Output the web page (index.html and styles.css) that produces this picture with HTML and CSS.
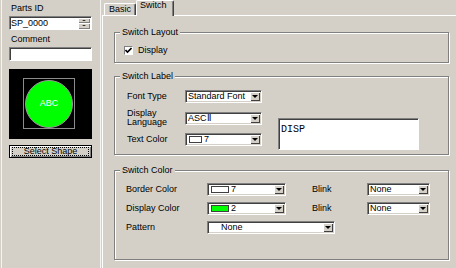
FILE: index.html
```html
<!DOCTYPE html>
<html>

<head>
    <title>Parts Settings - Switch</title>
    <link rel="stylesheet" href="styles.css">
</head>

<body>
    <div class="window">
        <div class="side">
            <div class="field-label">Parts ID</div>
            <div class="textbox spin-box">
                <span class="textbox-value">SP_0000</span>
                <span class="spinner">
                    <span class="spin-btn"><span class="arrow-up"></span></span>
                    <span class="spin-btn"><span class="arrow-down"></span></span>
                </span>
            </div>
            <div class="field-label">Comment</div>
            <div class="textbox"></div>
            <div class="preview">
                <div class="shape-frame">
                    <div class="shape">ABC</div>
                </div>
            </div>
            <div class="button"><span class="focus">Select Shape</span></div>
        </div>

        <div class="main">
            <div class="tabs">
                <div class="tab">Basic</div>
                <div class="tab active">Switch</div>
            </div>
            <div class="tab-panel">
                <fieldset class="group layout-group">
                    <legend>Switch Layout</legend>
                    <div class="check">
                        <span class="check-box">
                            <svg width="7" height="7" viewBox="0 0 7 7">
                                <path d="M0.5 3 L2.5 5 L6.5 1" fill="none" stroke="#000" stroke-width="1.6" />
                            </svg>
                        </span>
                        Display
                    </div>
                </fieldset>

                <fieldset class="group label-group">
                    <legend>Switch Label</legend>
                    <div class="label-row">
                        <div class="label-grid">
                            <span>Font Type</span>
                            <div class="combo"><span class="combo-value">Standard Font</span><span class="combo-btn"></span></div>
                            <span class="two-line">Display<br>Language</span>
                            <div class="combo"><span class="combo-value">ASCⅡ</span><span class="combo-btn"></span></div>
                            <span>Text Color</span>
                            <div class="combo"><span class="combo-value"><span class="swatch small"></span>7</span><span class="combo-btn"></span></div>
                        </div>
                        <div class="label-text">DISP</div>
                    </div>
                </fieldset>

                <fieldset class="group color-group">
                    <legend>Switch Color</legend>
                    <div class="color-grid">
                        <span>Border Color</span>
                        <div class="combo"><span class="combo-value"><span class="swatch"></span>7</span><span class="combo-btn"></span></div>
                        <span class="blink-label">Blink</span>
                        <div class="combo"><span class="combo-value">None</span><span class="combo-btn"></span></div>

                        <span>Display Color</span>
                        <div class="combo"><span class="combo-value"><span class="swatch green"></span>2</span><span class="combo-btn"></span></div>
                        <span class="blink-label">Blink</span>
                        <div class="combo"><span class="combo-value">None</span><span class="combo-btn"></span></div>

                        <span>Pattern</span>
                        <div class="combo pattern"><span class="combo-value indent">None</span><span class="combo-btn"></span></div>
                    </div>
                </fieldset>
            </div>
        </div>
    </div>
</body>

</html>
```

FILE: styles.css
```css
* {
    box-sizing: border-box;
}

body {
    margin: 0;
    width: 456px;
    height: 268px;
    overflow: hidden;
    background: #d4d0c8;
    color: #000;
    font-family: "Liberation Sans", Arial, sans-serif;
    font-size: 9px;
    line-height: 11px;
}

.window {
    display: flex;
    height: 268px;
}

/* left column */
.side {
    width: 100px;
    margin-left: 1px;
    padding: 3px 0 0 7px;
    border-left: 1px solid #f4f3ef;
    border-right: 1px solid #f4f3ef;
}

.field-label {
    padding-left: 2px;
    margin-bottom: 2px;
}

.side .textbox + .field-label {
    margin-top: 4px;
}

.textbox {
    width: 83px;
    height: 14px;
    background: #fff;
    border: 1px solid;
    border-color: #808080 #fff #fff #808080;
    box-shadow: inset 1px 1px #404040;
}

.spin-box {
    display: flex;
    align-items: center;
    padding: 1px 1px 0 1px;
}

.textbox-value {
    flex: 1;
    line-height: 11px;
}

.spinner {
    display: flex;
    flex-direction: column;
    width: 12px;
    height: 11px;
    margin-top: -1px;
}

.spin-btn {
    flex: 1;
    display: flex;
    align-items: center;
    justify-content: center;
    background: #d4d0c8;
    box-shadow: inset 1px 1px #fff, inset -1px -1px #808080;
}

.arrow-up,
.arrow-down {
    width: 0;
    height: 0;
    border-left: 2px solid transparent;
    border-right: 2px solid transparent;
}

.arrow-up {
    border-bottom: 1px solid #000;
}

.arrow-down {
    border-top: 1px solid #000;
}

.preview {
    width: 83px;
    height: 70px;
    margin-top: 8px;
    padding: 9px 0 0 14px;
    background: #000;
}

.shape-frame {
    width: 52px;
    height: 51px;
    border: 1px solid #8c8c8c;
    display: flex;
    align-items: center;
    justify-content: center;
}

.shape {
    width: 48px;
    height: 48px;
    border-radius: 50%;
    background: #00ff00;
    border: 1px solid #9a9a9a;
    color: #fff;
    display: flex;
    align-items: center;
    justify-content: center;
    font-size: 9px;
}

.button {
    width: 83px;
    height: 13px;
    margin-top: 6px;
    padding: 1px 2px;
    border: 1px solid #000;
    box-shadow: inset 1px 1px #fff, inset -1px -1px #808080;
}

.focus {
    display: block;
    height: 9px;
    border: 1px dotted #000;
    text-align: center;
    line-height: 7px;
}

/* tabs */
.main {
    flex: 1;
    margin-left: 1px;
}

.tabs {
    display: flex;
    align-items: flex-end;
    height: 15px;
    padding-left: 2px;
}

.tab {
    height: 12px;
    padding: 0 4px;
    border-top: 1px solid #fff;
    border-left: 1px solid #fff;
    border-right: 1px solid #404040;
    border-radius: 2px 2px 0 0;
    box-shadow: inset -1px 0 #808080;
    line-height: 10px;
}

.tab.active {
    position: relative;
    height: 16px;
    margin-bottom: -1px;
    padding: 0 6px 0 3px;
    background: #d4d0c8;
    line-height: 9px;
}

.tab-panel {
    height: 260px;
    padding: 0 0 0 11px;
    border-top: 1px solid #fff;
    border-left: 1px solid #fff;
}

/* group boxes */
.group {
    width: 335px;
    min-width: 0;
    margin: 8px 0 0 0;
    padding: 0;
    border: 1px solid #808080;
    box-shadow: 1px 1px #fff, inset 1px 1px #fff;
}

.layout-group {
    margin-top: 11px;
}

.color-group {
    margin-top: 10px;
}

.group legend {
    margin-left: 5px;
    padding: 0 2px;
    background: #d4d0c8;
    line-height: 11px;
}

.check {
    display: flex;
    align-items: center;
    height: 9px;
    margin: 8px 0 7px 9px;
}

.check-box {
    display: flex;
    align-items: center;
    justify-content: center;
    width: 9px;
    height: 9px;
    margin-right: 5px;
    background: #fff;
    border: 1px solid;
    border-color: #808080 #fff #fff #808080;
}

.label-row {
    display: flex;
    padding: 8px 0 4px 12px;
}

.label-grid {
    display: grid;
    grid-template-columns: 58px 77px;
    grid-template-rows: 13px 20px 13px;
    row-gap: 5px;
    align-items: center;
}

.two-line {
    line-height: 9px;
}

.label-text {
    width: 141px;
    height: 32px;
    margin: 28px 0 0 16px;
    padding: 5px 0 0 2px;
    background: #fff;
    border: 1px solid;
    border-color: #808080 #fff #fff #808080;
    box-shadow: inset 1px 1px #404040;
    font-family: "Liberation Mono", "Courier New", monospace;
    font-size: 10px;
}

.color-grid {
    display: grid;
    grid-template-columns: 81px 79px 26px 55px 63px;
    grid-auto-rows: 13px;
    row-gap: 6px;
    align-items: center;
    padding: 7px 0 25px 11px;
}

.blink-label {
    grid-column: 4;
}

.pattern {
    grid-column: 2 / span 3;
    width: 128px;
}

/* combo boxes */
.combo {
    display: flex;
    height: 13px;
    padding: 1px;
    background: #fff;
    border: 1px solid;
    border-color: #808080 #fff #fff #808080;
    box-shadow: inset 1px 1px #404040, inset -1px -1px #d4d0c8;
}

.combo-value {
    flex: 1;
    display: flex;
    align-items: center;
    padding-left: 1px;
    line-height: 9px;
    white-space: nowrap;
    overflow: hidden;
}

.combo-value.indent {
    padding-left: 12px;
}

.combo-btn {
    width: 10px;
    display: flex;
    align-items: center;
    justify-content: center;
    background: #d4d0c8;
    box-shadow: inset 1px 1px #fff, inset -1px -1px #404040;
}

.combo-btn::after {
    content: "";
    width: 0;
    height: 0;
    border-left: 3px solid transparent;
    border-right: 3px solid transparent;
    border-top: 3px solid #000;
}

.swatch {
    width: 18px;
    height: 7px;
    margin: 0 2px 0 1px;
    background: #fff;
    border: 1px solid #404040;
}

.swatch.small {
    width: 13px;
}

.swatch.green {
    background: #00ff00;
}
```
